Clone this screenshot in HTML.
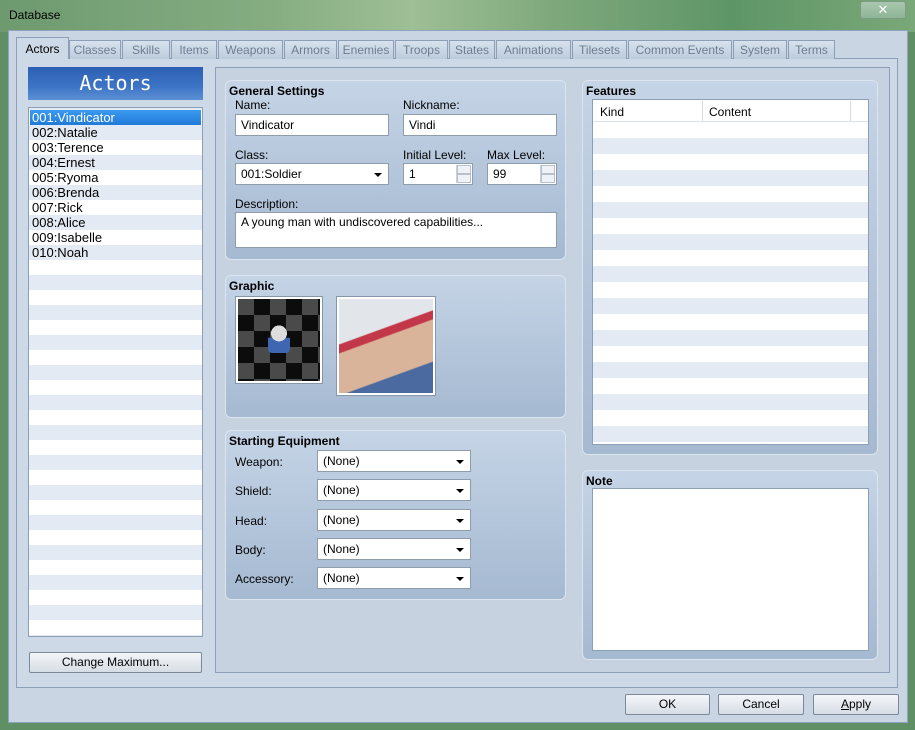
<!DOCTYPE html>
<html><head><meta charset="utf-8"><style>
*{box-sizing:border-box;margin:0;padding:0}
body{width:915px;height:730px;overflow:hidden;position:relative;font-family:"Liberation Sans","DejaVu Sans",sans-serif;font-size:12px;color:#000;background:#5f8f64}
.a{position:absolute}
.title{left:0;top:0;width:915px;height:32px;background:linear-gradient(90deg,#6e9a70 0%,#86ad82 30%,#9fbf96 45%,#7fa97d 60%,#5e9567 80%,#7aa878 100%)}
.win{left:8px;top:30px;width:900px;height:693px;background:#c9d5e3;border:1px solid #8ea3bd}
.pane{left:16px;top:58px;width:882px;height:630px;background:#cdd9e6;border:1px solid #8d9fb6}
.tab{top:40px;height:19px;background:linear-gradient(#d8e2ee,#bccbdc);border:1px solid #8d9fb6;border-bottom:none;color:#6d7d91;font-size:12px;text-align:center;line-height:18px}
.tab.on{top:37px;height:22px;background:#cdd9e6;color:#000;line-height:22px}
.hdr{left:28px;top:67px;width:175px;height:33px;background:linear-gradient(#2c5fb3,#3d74c5 60%,#5d8fd4);color:#fff;font-family:"DejaVu Sans Mono","Liberation Mono",monospace;font-size:20px;text-align:center;line-height:33px}
.list{left:28px;top:107px;width:175px;height:530px;border:1px solid #8d9fb6;background:repeating-linear-gradient(#fff 0 15px,#e4eaf3 15px 30px);background-position:0 2px}
.list div{height:15px;line-height:15px;padding-left:3px;font-size:13px}
.btn{height:21px;border:1px solid #7a8898;border-radius:2px;background:linear-gradient(#f4f6f9,#d7dde5);text-align:center;line-height:19px;font-size:12px}
.inner{left:215px;top:67px;width:675px;height:606px;border:1px solid #8d9fb6;background:#c6d2e0}
.panel{border-radius:6px;background:linear-gradient(#c5d4e6,#a5b9d1);border:1px solid #dbe4ef}
.panel b{position:absolute;left:3px;top:3px;font-size:12px}
.lbl{font-size:12px}
.inp{background:#fff;border:1px solid #8e9cab;height:22px;line-height:20px;padding-left:5px;font-size:12px}
.dd::after{content:"";position:absolute;right:6px;top:9px;border:4px solid transparent;border-top:4px solid #000;border-bottom:0}
.spin{position:absolute;right:1px;top:1px;width:15px;height:18px;border-left:1px solid #c9d0d8}
.spin i{display:block;height:9px;border:1px solid #b7c0cb;background:#eef1f5}
.chk{background-color:#4a4a4a;background-image:linear-gradient(45deg,#0c0c0c 25%,transparent 25%,transparent 75%,#0c0c0c 75%),linear-gradient(45deg,#0c0c0c 25%,transparent 25%,transparent 75%,#0c0c0c 75%);background-size:32px 32px;background-position:0 0,16px 16px;border:2px solid #fff;outline:1px solid #8797ab}
.tbl{background:repeating-linear-gradient(#fff 0 16px,#e4eaf3 16px 32px);background-position:0 22px;border:1px solid #8d9fb6}
</style></head><body>
<div class="a title"></div>
<div class="a" style="left:9px;top:8px;font-size:12px">Database</div>
<div class="a" style="left:860px;top:1px;width:46px;height:18px;border:1px solid #7d9a84;border-radius:3px;background:linear-gradient(#a9c7ae,#8eb596);color:#fff;text-align:center;font-weight:bold;line-height:16px;font-size:13px">✕</div>
<div class="a win"></div>
<div class="a pane"></div>
<div class="a tab on" style="left:16px;width:53px">Actors</div>
<div class="a tab" style="left:69px;width:52px">Classes</div>
<div class="a tab" style="left:122px;width:48px">Skills</div>
<div class="a tab" style="left:171px;width:46px">Items</div>
<div class="a tab" style="left:218px;width:65px">Weapons</div>
<div class="a tab" style="left:284px;width:53px">Armors</div>
<div class="a tab" style="left:338px;width:56px">Enemies</div>
<div class="a tab" style="left:395px;width:53px">Troops</div>
<div class="a tab" style="left:449px;width:46px">States</div>
<div class="a tab" style="left:496px;width:75px">Animations</div>
<div class="a tab" style="left:572px;width:55px">Tilesets</div>
<div class="a tab" style="left:628px;width:104px">Common Events</div>
<div class="a tab" style="left:733px;width:54px">System</div>
<div class="a tab" style="left:788px;width:47px">Terms</div>

<div class="a hdr">Actors</div>
<div class="a list">
<div style="color:#fff;margin:2px 1px 0;padding-left:2px;background:linear-gradient(#3c9af0,#1f7ad8)">001:Vindicator</div>
<div>002:Natalie</div><div>003:Terence</div><div>004:Ernest</div><div>005:Ryoma</div><div>006:Brenda</div><div>007:Rick</div><div>008:Alice</div><div>009:Isabelle</div><div>010:Noah</div>
</div>
<div class="a btn" style="left:29px;top:652px;width:173px">Change Maximum...</div>

<div class="a inner"></div>
<div class="a panel" style="left:225px;top:80px;width:341px;height:180px"><b>General Settings</b></div>
<div class="a lbl" style="left:235px;top:98px">Name:</div>
<div class="a lbl" style="left:403px;top:98px">Nickname:</div>
<div class="a inp" style="left:235px;top:114px;width:154px">Vindicator</div>
<div class="a inp" style="left:403px;top:114px;width:154px">Vindi</div>
<div class="a lbl" style="left:235px;top:148px">Class:</div>
<div class="a lbl" style="left:403px;top:148px">Initial Level:</div>
<div class="a lbl" style="left:487px;top:148px">Max Level:</div>
<div class="a inp dd" style="left:235px;top:163px;width:154px">001:Soldier</div>
<div class="a inp" style="left:403px;top:163px;width:70px">1<div class="spin"><i></i><i></i></div></div>
<div class="a inp" style="left:487px;top:163px;width:70px">99<div class="spin"><i></i><i></i></div></div>
<div class="a lbl" style="left:235px;top:197px">Description:</div>
<div class="a inp" style="left:235px;top:212px;width:322px;height:36px;line-height:18px">A young man with undiscovered capabilities...</div>

<div class="a panel" style="left:225px;top:275px;width:341px;height:143px"><b>Graphic</b></div>
<div class="a chk" style="left:236px;top:297px;width:86px;height:86px"></div>
<div class="a" style="left:268px;top:325px;width:22px;height:28px;background:radial-gradient(circle at 50% 30%,#ddd 0 35%,transparent 36%),linear-gradient(transparent 45%,#3f66b0 46%);border-radius:4px"></div>
<div class="a chk" style="left:337px;top:297px;width:98px;height:98px;background:linear-gradient(160deg,#e2e6ea 0 35%,#c23848 36% 42%,#d9b49a 43% 75%,#4a6aa0 76%)"></div>

<div class="a panel" style="left:225px;top:430px;width:341px;height:170px"><b>Starting Equipment</b></div>
<div class="a lbl" style="left:235px;top:455px">Weapon:</div>
<div class="a inp dd" style="left:317px;top:450px;width:154px">(None)</div>
<div class="a lbl" style="left:235px;top:484px">Shield:</div>
<div class="a inp dd" style="left:317px;top:479px;width:154px">(None)</div>
<div class="a lbl" style="left:235px;top:514px">Head:</div>
<div class="a inp dd" style="left:317px;top:509px;width:154px">(None)</div>
<div class="a lbl" style="left:235px;top:543px">Body:</div>
<div class="a inp dd" style="left:317px;top:538px;width:154px">(None)</div>
<div class="a lbl" style="left:235px;top:572px">Accessory:</div>
<div class="a inp dd" style="left:317px;top:567px;width:154px">(None)</div>

<div class="a panel" style="left:582px;top:80px;width:296px;height:375px"><b>Features</b></div>
<div class="a tbl" style="left:592px;top:99px;width:277px;height:346px"></div>
<div class="a" style="left:593px;top:100px;width:275px;height:22px;background:#fff;border-bottom:1px solid #dde3ea"></div>
<div class="a lbl" style="left:600px;top:105px">Kind</div>
<div class="a" style="left:702px;top:101px;width:1px;height:20px;background:#d5dbe3"></div>
<div class="a lbl" style="left:709px;top:105px">Content</div>
<div class="a" style="left:850px;top:101px;width:1px;height:20px;background:#d5dbe3"></div>

<div class="a panel" style="left:582px;top:470px;width:296px;height:190px"><b>Note</b></div>
<div class="a" style="left:592px;top:488px;width:277px;height:163px;background:#fff;border:1px solid #8d9fb6"></div>

<div class="a btn" style="left:625px;top:694px;width:85px">OK</div>
<div class="a btn" style="left:718px;top:694px;width:86px">Cancel</div>
<div class="a btn" style="left:813px;top:694px;width:86px"><u>A</u>pply</div>
</body></html>
